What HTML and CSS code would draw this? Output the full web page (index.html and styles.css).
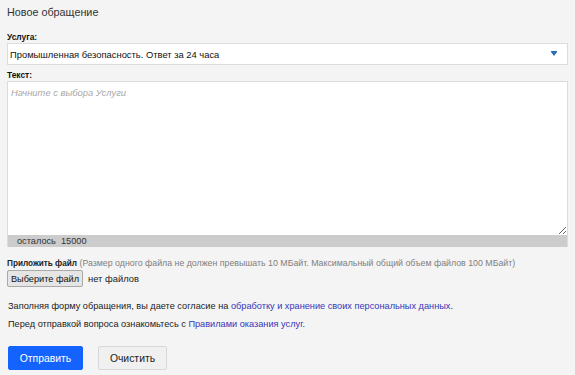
FILE: index.html
```html
<!DOCTYPE html>
<html lang="ru">

<head>
    <meta charset="UTF-8">
    <meta name="viewport" content="width=device-width, initial-scale=1.0">
    <title>Новое обращение</title>
    <link rel="stylesheet" href="styles.css">
</head>

<body>
    <h1 class="page-title">Новое обращение</h1>

    <form id="ticket-form">
        <label class="field-label">Услуга:</label>
        <div class="select-box">
            <span>Промышленная безопасность. Ответ за 24 часа</span>
            <span class="arrow"></span>
        </div>

        <label class="field-label" for="text">Текст:</label>
        <div class="text-wrap">
            <textarea id="text" placeholder="Начните с выбора Услуги"></textarea>
            <div class="counter">осталось&nbsp;&nbsp;15000</div>
        </div>

        <div class="attach-label"><b>Приложить файл</b> <span class="hint">(Размер одного файла не должен превышать 10 МБайт. Максимальный общий объем файлов 100 МБайт)</span></div>
        <div class="file-row">
            <button type="button" class="file-button">Выберите файл</button>
            <span>нет файлов</span>
        </div>

        <p class="note">Заполняя форму обращения, вы даете согласие на <a href="#">обработку и хранение своих персональных данных</a>.</p>
        <p class="note">Перед отправкой вопроса ознакомьтесь с <a href="#">Правилами оказания услуг</a>.</p>

        <div class="actions">
            <button type="submit" class="send-button">Отправить</button>
            <button type="reset" class="clear-button">Очистить</button>
        </div>
    </form>
</body>

</html>
```

FILE: styles.css
```css
body {
    font-family: "Liberation Sans", Arial, sans-serif;
    margin: 0;
    padding: 5px 7px 0 7px;
    background-color: #f4f4f4;
    color: #222;
    font-size: 9.2px;
}

.page-title {
    font-size: 10.8px;
    line-height: 14px;
    font-weight: normal;
    margin: 0 0 13px 0;
    color: #333;
}

.field-label {
    display: block;
    font-weight: bold;
    font-size: 8.4px;
    line-height: 10px;
    margin-bottom: 1px;
    color: #111;
}

.select-box {
    display: flex;
    justify-content: space-between;
    align-items: center;
    height: 20px;
    background: white;
    border: 1px solid #dcdcdc;
    padding: 0 10px 0 2px;
    font-size: 9.4px;
    margin-bottom: 5px;
    color: #111;
}

.arrow {
    width: 0;
    height: 0;
    border-left: 3px solid transparent;
    border-right: 3px solid transparent;
    border-top: 4px solid #2a6db5;
    box-shadow: 0 -1px 0 0 #2a6db5;
}

.text-wrap {
    border: 1px solid #dcdcdc;
    border-bottom: none;
    margin-top: 1px;
    margin-bottom: 11px;
}

textarea {
    display: block;
    width: 100%;
    height: 153px;
    box-sizing: border-box;
    border: none;
    padding: 5px 3px;
    font-family: "Liberation Sans", Arial, sans-serif;
    font-size: 9.4px;
    line-height: 12px;
    font-style: italic;
    resize: vertical;
}

textarea::placeholder {
    color: #a8a8a8;
}

.counter {
    background: #cccccc;
    height: 12px;
    line-height: 13px;
    padding-left: 9px;
    font-size: 9.2px;
    color: #333;
}

.attach-label {
    font-size: 8.8px;
    line-height: 10px;
    margin-bottom: 1px;
}

.attach-label b {
    font-size: 8.2px;
}

.hint {
    color: #808080;
}

.file-row {
    display: flex;
    align-items: center;
    gap: 5px;
    font-size: 9.4px;
    height: 17px;
    margin-bottom: 13px;
}

.file-button {
    font-family: "Liberation Sans", Arial, sans-serif;
    font-size: 9.2px;
    width: 76px;
    padding: 0;
    height: 17px;
    background: #e5e5e5;
    border: 1px solid #a9a9a9;
    border-radius: 2px;
    color: #111;
}

.note {
    margin: 0 0 6px 1px;
    line-height: 12px;
    color: #222;
}

.note a {
    color: #3636b8;
    text-decoration: none;
}

.actions {
    display: flex;
    gap: 15px;
    margin-top: 16px;
    padding-left: 1px;
}

.send-button, .clear-button {
    font-family: "Liberation Sans", Arial, sans-serif;
    font-size: 10.4px;
    height: 24px;
    border-radius: 2px;
    cursor: pointer;
}

.send-button {
    width: 75px;
    background-color: #1563ff;
    color: white;
    border: 1px solid #1563ff;
}

.clear-button {
    width: 69px;
    background-color: #f0f0f0;
    color: #222;
    border: 1px solid #d8d8d8;
}
```
